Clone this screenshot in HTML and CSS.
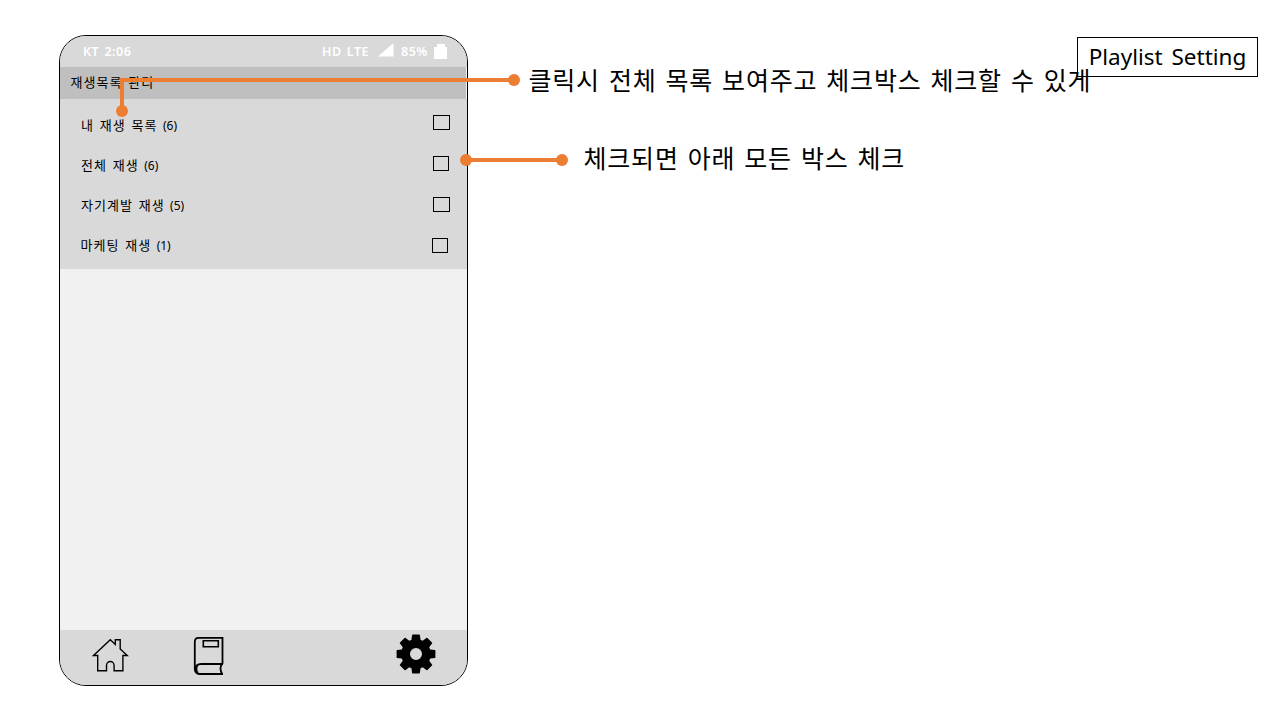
FILE: index.html
```html
<!DOCTYPE html>
<html lang="ko">
<head>
<meta charset="utf-8">
<title>Playlist Setting</title>
<link rel="stylesheet" href="styles.css">
</head>
<body>
<main class="slide">
  <section class="phone">
    <header class="status">
      <span class="carrier">KT 2:06</span>
      <span class="network">HD LTE</span>
      <svg class="signal" width="16" height="14" viewBox="0 0 16 14"><path d="M0 13.5 15.5 0V13.5Z" fill="#fff"/></svg>
      <span class="percent">85%</span>
      <svg class="battery" width="13" height="15" viewBox="0 0 13 15"><path d="M0 3H3V0H11V3H13V15H0Z" fill="#fff"/></svg>
    </header>
    <h1 class="title ko">재생목록 관리</h1>
    <ul class="list">
      <li class="row"><span class="ko">내 재생 목록</span><span class="count">(6)</span><i class="box wide"></i></li>
      <li class="row second"><span class="ko">전체 재생</span><span class="count">(6)</span><i class="box"></i></li>
      <li class="row third"><span class="ko">자기계발 재생</span><span class="count">(5)</span><i class="box wide"></i></li>
      <li class="row fourth"><span class="ko">마케팅 재생</span><span class="count">(1)</span><i class="box"></i></li>
    </ul>
    <div class="content"></div>
    <nav class="tabs">
      <svg class="home" width="38" height="34" viewBox="0 0 38 34" fill="none" stroke="#000" stroke-width="1.4"><path d="M1.5 17.5 18.3 1.8 23.3 6.5V1.8H28.2V11L35.2 17.5H30.9V32.7H22.1V27.5A3.8 4 0 0 0 14.5 27.5V32.7H5.7V17.5Z"/></svg>
      <svg class="book" width="32" height="40" viewBox="0 0 32 40" fill="none" stroke="#000" stroke-width="1.8"><path d="M29.5 28V1.8H5.5Q1.8 1.8 1.8 6V33"/><path d="M10.3 4.8H25.3V10.7H10.3Z" stroke-width="1.6"/><path d="M30 28H8C4.3 28 2.5 30.5 1.8 33.5C2.2 36.5 4 38 6.5 38H30M28.8 28Q26 33 29.2 38"/><path d="M2 30V34Q2 37 6 38Q2.8 34 4.6 29" fill="#000" stroke-width=".6"/></svg>
      <svg class="gear" width="40" height="40" viewBox="-20 -20 40 40"><defs><path id="tooth" d="M-4.8-12-3.9-19Q-3.7-19.4-3.2-19.4H3.2Q3.7-19.4 3.9-19L4.8-12Z"/></defs><circle r="10.4" fill="none" stroke="#000" stroke-width="8.8"/><use href="#tooth"/><use href="#tooth" transform="rotate(45)"/><use href="#tooth" transform="rotate(90)"/><use href="#tooth" transform="rotate(135)"/><use href="#tooth" transform="rotate(180)"/><use href="#tooth" transform="rotate(225)"/><use href="#tooth" transform="rotate(270)"/><use href="#tooth" transform="rotate(315)"/></svg>
    </nav>
  </section>
  <aside class="notes">
    <div class="label">Playlist Setting</div>
    <p class="note first">클릭시 전체 목록 보여주고 체크박스 체크할 수 있게</p>
    <p class="note all">체크되면 아래 모든 박스 체크</p>
  </aside>
  <svg class="connectors" width="1280" height="720" viewBox="0 0 1280 720">
    <g fill="none" stroke="#ed7d31" stroke-width="4"><path d="M514 80H122V111M466 160H562"/></g>
    <g fill="#ed7d31"><circle cx="514" cy="80" r="6"/><circle cx="122" cy="111" r="6"/><circle cx="466" cy="160" r="6"/><circle cx="562" cy="160" r="6"/></g>
  </svg>
</main>
</body>
</html>
```
FILE: styles.css
```css
* { box-sizing: border-box; }
body { margin: 0; background: #fff; color: #000; font-family: "Noto Sans", "Noto Sans CJK KR", sans-serif; }
.slide { position: relative; width: 1280px; height: 720px; overflow: hidden; display: flex; padding: 35px 0 0 59px; }
.phone { flex: none; width: 409px; height: 651px; border: 1px solid #000; border-radius: 27px; background: #f2f2f2; overflow: hidden; display: flex; flex-direction: column; }
.status { height: 31px; background: #d9d9d9; color: #fff; display: flex; align-items: center; padding-left: 23px; font: 600 12.5px/30px "Noto Sans", sans-serif; letter-spacing: .5px; white-space: nowrap; }
.carrier { width: 239px; word-spacing: 1.5px; }
.network { width: 56px; word-spacing: 1.5px; }
.percent { width: 33px; margin-left: 7px; }
.signal { flex: none; margin-top: -4px; }
.battery { flex: none; margin-top: -1px; }
.ko { font-family: "Noto Sans CJK KR", sans-serif; font-size: 13px; font-weight: 400; letter-spacing: 1px; word-spacing: 1.2px; white-space: nowrap; }
.title { margin: 0; width: 406px; height: 32px; padding-left: 10.5px; line-height: 29px; background: #bfbfbf; }
.list { list-style: none; margin: 0; padding: 7px 17px 0 21px; height: 170px; width: 407px; background: #d9d9d9; }
.row { display: flex; align-items: center; height: 40px; padding-bottom: 1px; }
.row .ko { margin-top: -3px; }
.count { margin-left: 5.5px; margin-top: 0; font-size: 12px; }
.box { width: 16px; height: 15px; margin-left: auto; margin-right: 1px; margin-top: -6px; border: 1px solid #000; }
.box.wide { width: 17px; margin-right: 0; }
.second .box { margin-top: -4px; }
.third .box { margin-top: -2px; }
.fourth .box { margin-top: 0; margin-right: 2px; }
.fourth .ko { margin-left: -.5px; }
.content { flex: 1; background: #f1f1f1; }
.tabs { height: 55px; width: 407px; background: #d9d9d9; display: flex; align-items: flex-start; }
.home { margin: 8px 0 0 32px; }
.book { margin: 6px 0 0 63px; }
.gear { margin: 4px 31px 0 auto; }
.notes { flex: 1; padding-top: 2px; padding-right: 22px; }
.label { width: 181px; height: 40px; margin-left: auto; border: 1px solid #000; font-size: 22.5px; line-height: 38px; word-spacing: 3px; text-align: center; white-space: nowrap; }
.note { margin: 0; font-family: "Noto Sans CJK KR", sans-serif; font-size: 25px; line-height: 36px; letter-spacing: .8px; word-spacing: 1.2px; white-space: nowrap; }
.note.first { padding-left: 60.5px; margin-top: -16px; }
.note.all { padding-left: 115.5px; margin-top: 42px; }
.connectors { position: absolute; inset: 0; pointer-events: none; }
```
